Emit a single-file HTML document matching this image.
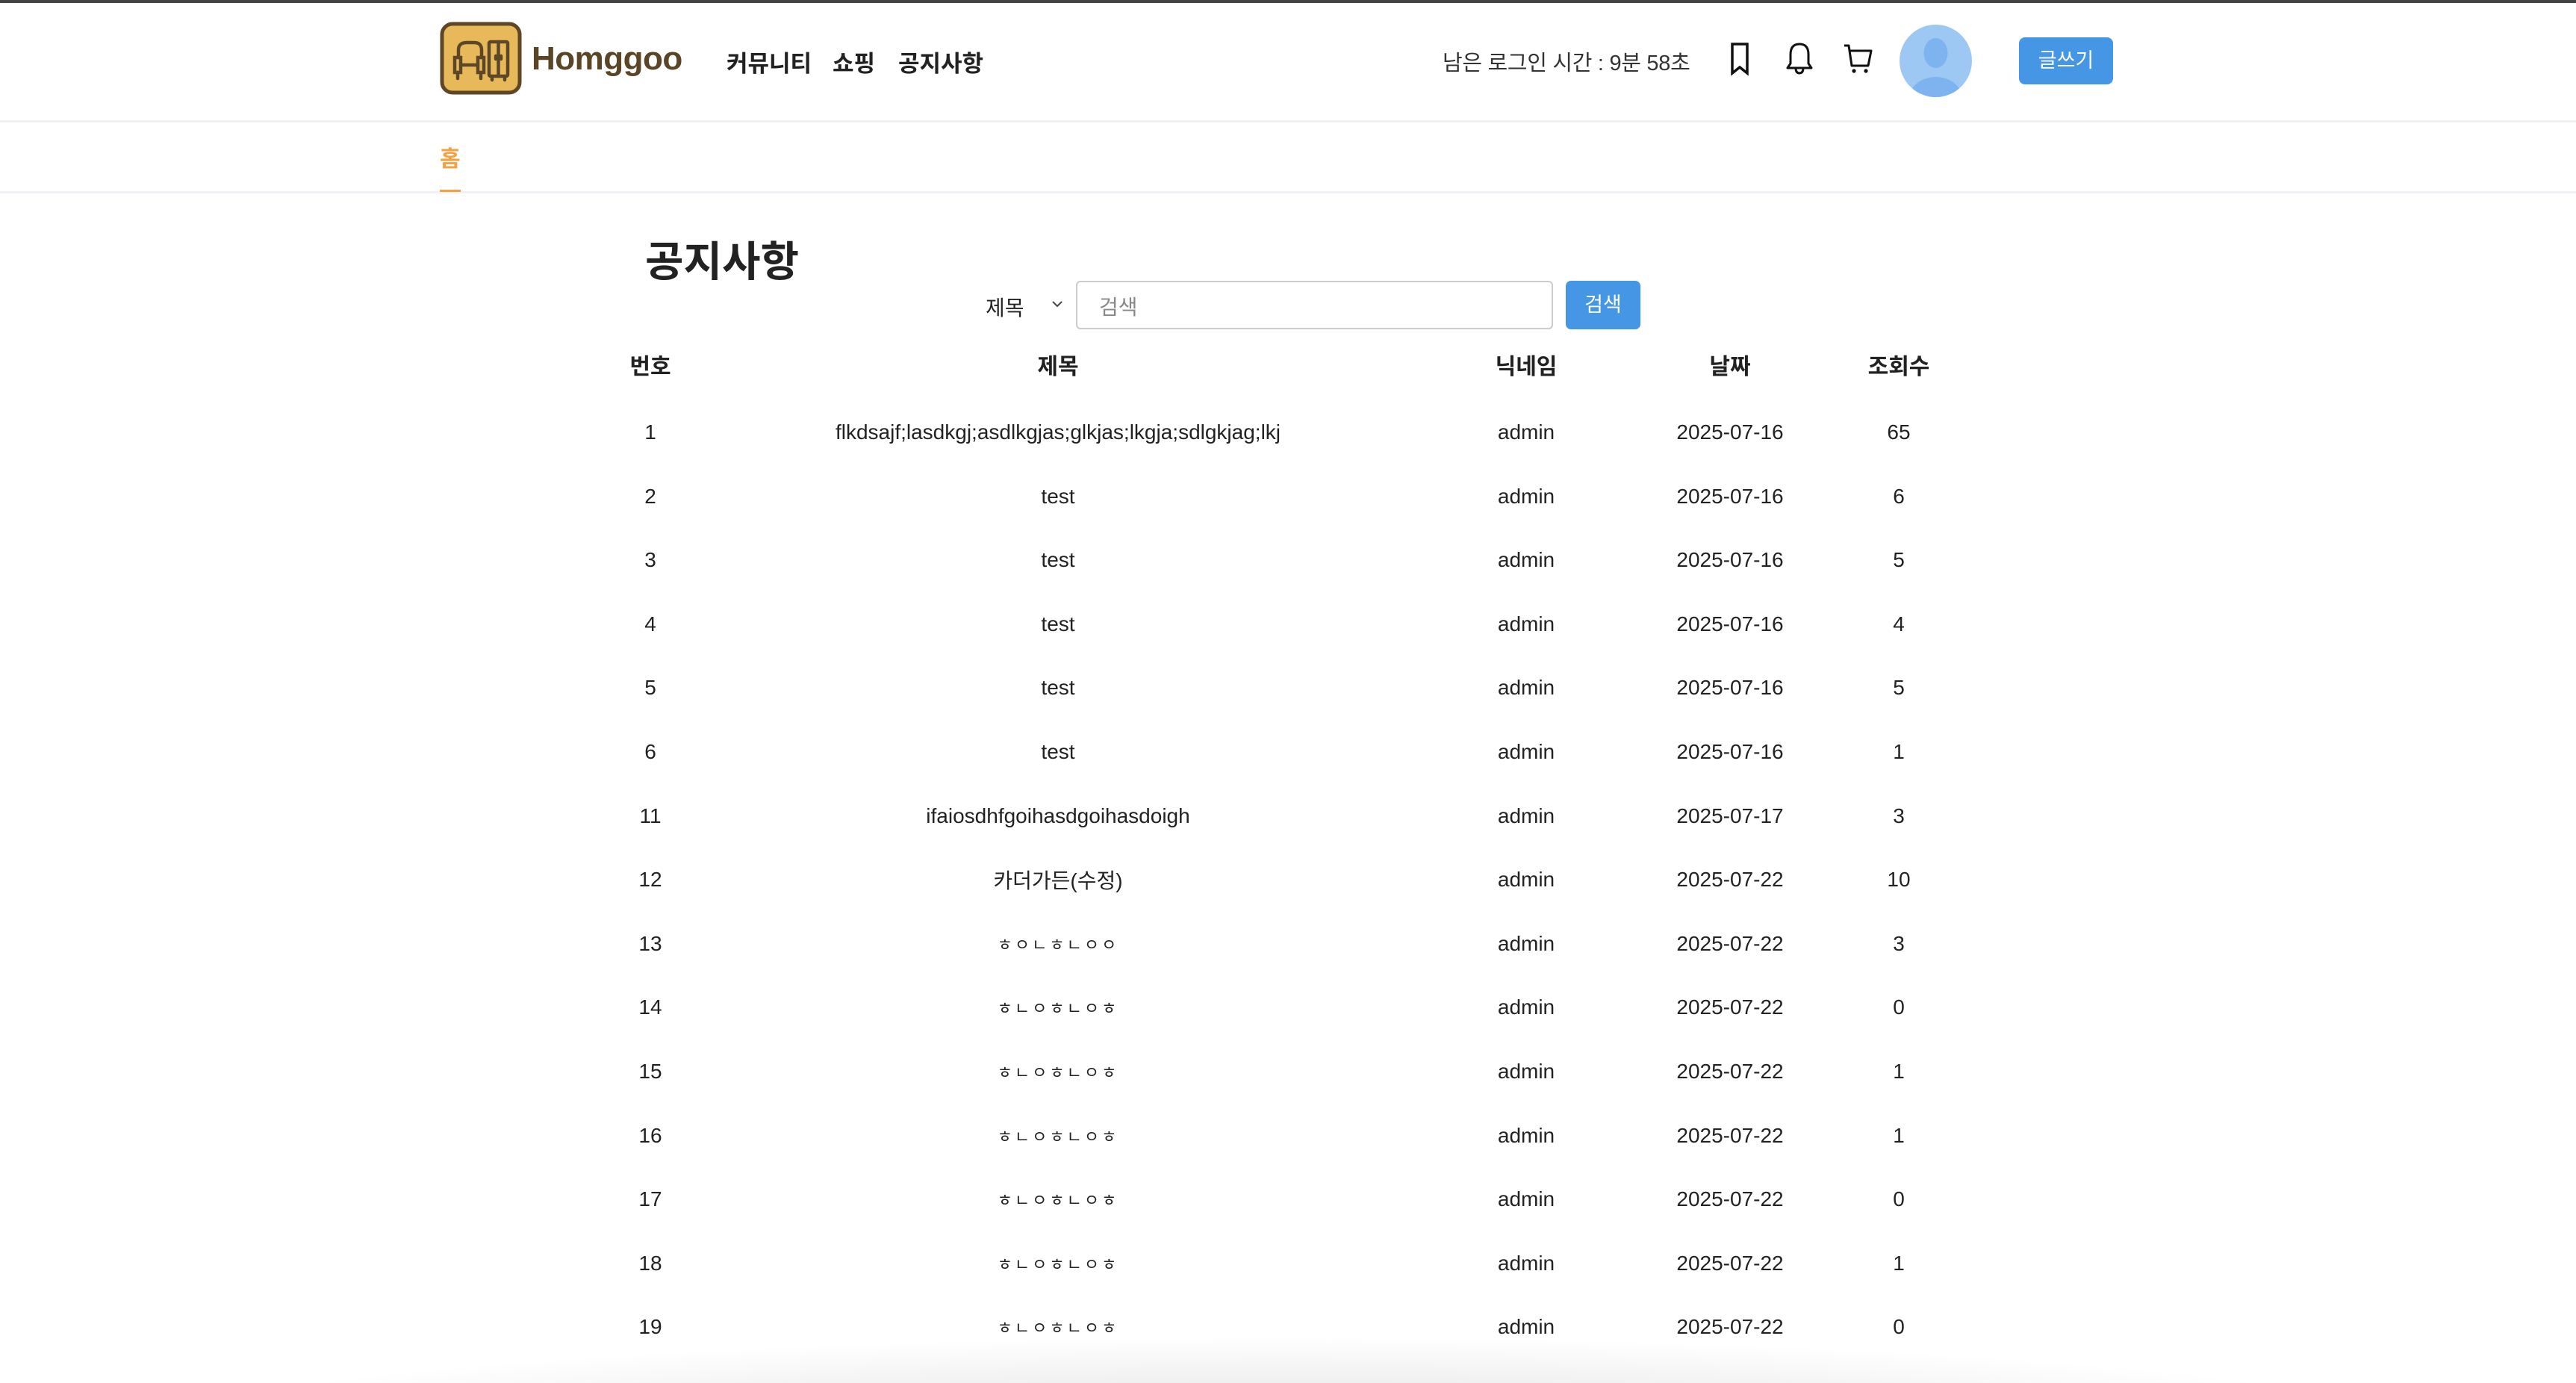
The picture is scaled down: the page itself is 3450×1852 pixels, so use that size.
<!DOCTYPE html>
<html><head><meta charset="utf-8"><style>
*{margin:0;padding:0;box-sizing:border-box}
html,body{width:3450px;height:1852px;overflow:hidden;background:#fff;font-family:"Liberation Sans","Noto Sans CJK KR",sans-serif;color:#222}
.a{position:absolute;white-space:nowrap}
.row{position:absolute;left:0;width:3450px;font-size:28px;color:#222}
.row span{position:absolute;transform:translate(-50%,-50%);white-space:nowrap}
</style></head><body>
<div class="a" style="left:0;top:0;width:3450px;height:4px;background:#444"></div>
<div class="a" style="left:0;top:161px;width:3450px;height:3px;background:#f1f1f5"></div>
<div class="a" style="left:0;top:256px;width:3450px;height:3px;background:#f1f1f5"></div>

<div class="a" style="left:0;top:1770px;width:3450px;height:82px;background:radial-gradient(ellipse 1550px 130px at 1725px 150px, rgba(0,0,0,0.12), rgba(0,0,0,0.04) 70%, rgba(0,0,0,0) 100%)"></div>

<svg class="a" style="left:585px;top:25px" width="120" height="105" viewBox="0 0 120 105">
<rect x="7" y="7" width="104" height="92" rx="14" fill="#e8b95a" stroke="#5e4727" stroke-width="5"/>
<g fill="none" stroke="#5e4727" stroke-width="4.5" stroke-linecap="round">
<path d="M29 52 V42 Q29 32 40 32 H50 Q60 32 60 42 V52"/>
<path d="M24 52 h8 v20 h-8 z M55 52 h8 v20 h-8 z"/>
<path d="M32 62 H55 M28 72 V80 M59 72 V80"/>
<rect x="70" y="31" width="25" height="46" rx="2"/>
<path d="M82.5 31 V77 M74 77 V82 M91 77 V82 M79 50 v4 M86 50 v4"/>
</g></svg>
<div class="a" style="left:712px;top:54px;font-size:44px;font-weight:bold;color:#5a4526;letter-spacing:-0.5px">Homggoo</div>
<div class="a" style="left:973px;top:60px;font-size:31px;font-weight:bold">커뮤니티</div>
<div class="a" style="left:1115px;top:60px;font-size:31px;font-weight:bold">쇼핑</div>
<div class="a" style="left:1203px;top:60px;font-size:31px;font-weight:bold">공지사항</div>

<div class="a" style="left:1932px;top:61px;font-size:29px;color:#333;letter-spacing:-0.3px">남은 로그인 시간 : 9분 58초</div>
<svg class="a" style="left:2310px;top:56px" width="40" height="46" viewBox="0 0 40 46"><path d="M10 3 H30 V42 L20 34 L10 42 Z" fill="none" stroke="#111" stroke-width="3.5"/></svg>
<svg class="a" style="left:2388px;top:55px" width="44" height="46" viewBox="0 0 44 46"><path d="M22 4 Q10 4 10 18 V30 L6 36 H38 L34 30 V18 Q34 4 22 4 Z M17 36 Q17 43 22 43 Q27 43 27 36" fill="none" stroke="#111" stroke-width="3" stroke-linejoin="round"/></svg>
<svg class="a" style="left:2468px;top:58px" width="44" height="42" viewBox="0 0 44 42"><path d="M2 3 H8 L12 30 H34 L38 10 H9" fill="none" stroke="#111" stroke-width="3" stroke-linejoin="round"/><circle cx="15" cy="37" r="2.6" fill="#111"/><circle cx="31" cy="37" r="2.6" fill="#111"/></svg>
<svg class="a" style="left:2544px;top:33px" width="97" height="97" viewBox="0 0 97 97"><defs><clipPath id="cp"><circle cx="48.5" cy="48.5" r="48.5"/></clipPath></defs><circle cx="48.5" cy="48.5" r="48.5" fill="#9ec8f4"/><g clip-path="url(#cp)" fill="#7db3ee"><ellipse cx="48.5" cy="38" rx="16" ry="20"/><ellipse cx="48.5" cy="100" rx="36" ry="30"/></g></svg>
<div class="a" style="left:2704px;top:50px;width:126px;height:63px;border-radius:8px;background:#4597e6;color:#fff;font-size:27px;text-align:center;line-height:63px">글쓰기</div>

<div class="a" style="left:589px;top:188px;font-size:30px;font-weight:bold;color:#f2a240">홈</div>
<div class="a" style="left:589px;top:254px;width:28px;height:3px;background:#f2a240"></div>

<div class="a" style="left:864px;top:306px;font-size:56px;font-weight:bold;color:#222">공지사항</div>
<div class="a" style="left:1320px;top:391px;font-size:28px;color:#222">제목</div>
<svg class="a" style="left:1408px;top:400px" width="16" height="14" viewBox="0 0 16 14"><path d="M2 4 L8 10 L14 4" fill="none" stroke="#444" stroke-width="2"/></svg>
<div class="a" style="left:1441px;top:376px;width:639px;height:65px;border:2px solid #ccc;border-radius:6px"></div>
<div class="a" style="left:1472px;top:390px;font-size:28px;color:#888">검색</div>
<div class="a" style="left:2097px;top:376px;width:100px;height:65px;border-radius:7px;background:#4597e6;color:#fff;font-size:27px;text-align:center;line-height:65px">검색</div>

<div class="row" style="top:488px;font-size:30px;font-weight:bold"><span style="left:871px">번호</span><span style="left:1417px">제목</span><span style="left:2044px">닉네임</span><span style="left:2317px">날짜</span><span style="left:2543px">조회수</span></div>

<div class="row" style="top:579px"><span style="left:871px">1</span><span style="left:1417px">flkdsajf;lasdkgj;asdlkgjas;glkjas;lkgja;sdlgkjag;lkj</span><span style="left:2044px">admin</span><span style="left:2317px">2025-07-16</span><span style="left:2543px">65</span></div>
<div class="row" style="top:665px"><span style="left:871px">2</span><span style="left:1417px">test</span><span style="left:2044px">admin</span><span style="left:2317px">2025-07-16</span><span style="left:2543px">6</span></div>
<div class="row" style="top:750px"><span style="left:871px">3</span><span style="left:1417px">test</span><span style="left:2044px">admin</span><span style="left:2317px">2025-07-16</span><span style="left:2543px">5</span></div>
<div class="row" style="top:836px"><span style="left:871px">4</span><span style="left:1417px">test</span><span style="left:2044px">admin</span><span style="left:2317px">2025-07-16</span><span style="left:2543px">4</span></div>
<div class="row" style="top:921px"><span style="left:871px">5</span><span style="left:1417px">test</span><span style="left:2044px">admin</span><span style="left:2317px">2025-07-16</span><span style="left:2543px">5</span></div>
<div class="row" style="top:1007px"><span style="left:871px">6</span><span style="left:1417px">test</span><span style="left:2044px">admin</span><span style="left:2317px">2025-07-16</span><span style="left:2543px">1</span></div>
<div class="row" style="top:1093px"><span style="left:871px">11</span><span style="left:1417px">ifaiosdhfgoihasdgoihasdoigh</span><span style="left:2044px">admin</span><span style="left:2317px">2025-07-17</span><span style="left:2543px">3</span></div>
<div class="row" style="top:1178px"><span style="left:871px">12</span><span style="left:1417px">카더가든(수정)</span><span style="left:2044px">admin</span><span style="left:2317px">2025-07-22</span><span style="left:2543px">10</span></div>
<div class="row" style="top:1264px"><span style="left:871px">13</span><span style="left:1417px;font-size:22px;letter-spacing:3px">ㅎㅇㄴㅎㄴㅇㅇ</span><span style="left:2044px">admin</span><span style="left:2317px">2025-07-22</span><span style="left:2543px">3</span></div>
<div class="row" style="top:1349px"><span style="left:871px">14</span><span style="left:1417px;font-size:22px;letter-spacing:3px">ㅎㄴㅇㅎㄴㅇㅎ</span><span style="left:2044px">admin</span><span style="left:2317px">2025-07-22</span><span style="left:2543px">0</span></div>
<div class="row" style="top:1435px"><span style="left:871px">15</span><span style="left:1417px;font-size:22px;letter-spacing:3px">ㅎㄴㅇㅎㄴㅇㅎ</span><span style="left:2044px">admin</span><span style="left:2317px">2025-07-22</span><span style="left:2543px">1</span></div>
<div class="row" style="top:1521px"><span style="left:871px">16</span><span style="left:1417px;font-size:22px;letter-spacing:3px">ㅎㄴㅇㅎㄴㅇㅎ</span><span style="left:2044px">admin</span><span style="left:2317px">2025-07-22</span><span style="left:2543px">1</span></div>
<div class="row" style="top:1606px"><span style="left:871px">17</span><span style="left:1417px;font-size:22px;letter-spacing:3px">ㅎㄴㅇㅎㄴㅇㅎ</span><span style="left:2044px">admin</span><span style="left:2317px">2025-07-22</span><span style="left:2543px">0</span></div>
<div class="row" style="top:1692px"><span style="left:871px">18</span><span style="left:1417px;font-size:22px;letter-spacing:3px">ㅎㄴㅇㅎㄴㅇㅎ</span><span style="left:2044px">admin</span><span style="left:2317px">2025-07-22</span><span style="left:2543px">1</span></div>
<div class="row" style="top:1777px"><span style="left:871px">19</span><span style="left:1417px;font-size:22px;letter-spacing:3px">ㅎㄴㅇㅎㄴㅇㅎ</span><span style="left:2044px">admin</span><span style="left:2317px">2025-07-22</span><span style="left:2543px">0</span></div>
</body></html>
